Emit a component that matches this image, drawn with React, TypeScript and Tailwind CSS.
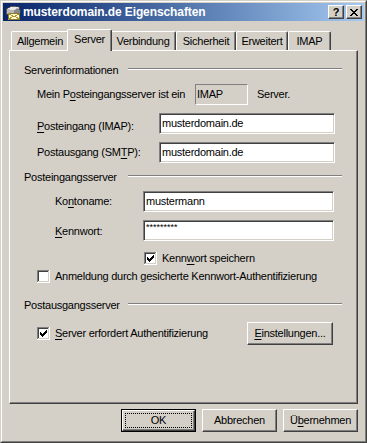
import React from "react";

const U = ({ c }: { c: string }) => (
  <span className="underline decoration-1 underline-offset-[2px]">{c}</span>
);

const sunken =
  "border border-t-[#808080] border-l-[#808080] border-r-white border-b-white shadow-[inset_1px_1px_0_#404040,inset_-1px_-1px_0_#d4d0c8]";
const raised =
  "border border-t-white border-l-white border-r-[#404040] border-b-[#404040] shadow-[inset_-1px_-1px_0_#808080]";

function Check({ checked }: { checked: boolean }) {
  return (
    <svg width="13" height="13" viewBox="0 0 13 13" shapeRendering="crispEdges" className="block shrink-0">
      <rect x="0" y="0" width="13" height="13" fill="#fff" />
      <rect x="0" y="0" width="12" height="1" fill="#808080" />
      <rect x="0" y="0" width="1" height="12" fill="#808080" />
      <rect x="1" y="1" width="10" height="1" fill="#404040" />
      <rect x="1" y="1" width="1" height="10" fill="#404040" />
      <rect x="1" y="11" width="11" height="1" fill="#d4d0c8" />
      <rect x="11" y="1" width="1" height="11" fill="#d4d0c8" />
      {checked && (
        <g fill="#000">
          <rect x="9" y="3" width="1" height="1" />
          <rect x="8" y="4" width="2" height="1" />
          <rect x="3" y="5" width="1" height="1" />
          <rect x="7" y="5" width="3" height="1" />
          <rect x="3" y="6" width="2" height="1" />
          <rect x="6" y="6" width="3" height="1" />
          <rect x="3" y="7" width="5" height="1" />
          <rect x="4" y="8" width="3" height="1" />
          <rect x="5" y="9" width="1" height="1" />
        </g>
      )}
    </svg>
  );
}

function Heading({ text }: { text: string }) {
  return (
    <div className="flex h-[13px] items-start">
      <div className="w-[118px] pl-[14px] whitespace-nowrap">{text}</div>
      <div className="mt-[4px] h-[2px] w-[214px] border-t border-b border-t-[#808080] border-b-white" />
    </div>
  );
}

function Field({ value, w }: { value: string; w: string }) {
  return (
    <div className={`${sunken} ${w} flex h-[21px] items-center bg-white px-[2px] whitespace-nowrap`}>{value}</div>
  );
}

function TitleIcon() {
  return (
    <svg width="16" height="16" viewBox="0 0 16 16" className="block shrink-0" shapeRendering="crispEdges">
      <path d="M1 5 L7 2 L14 3 L15 6 L15 9 L9 12 L1 10 Z" fill="#b8b8b8" />
      <path d="M1 5 L7 2 L14 3 L9 6 Z" fill="#e8e8e8" />
      <path d="M9 6 L15 4 L15 9 L9 12 Z" fill="#888" />
      <path d="M1 5 L7 2 L14 3 L15 6 L15 9 L9 12 L1 10 Z" fill="none" stroke="#404040" strokeWidth="0.8" />
      <rect x="3.5" y="9.5" width="11" height="6" fill="#fffbd0" stroke="#8a7a30" />
      <path d="M3.5 9.5 L9 13 L14.5 9.5 M3.5 15.5 L7.5 12.5 M14.5 15.5 L10.5 12.5" fill="none" stroke="#b09a30" />
    </svg>
  );
}

const tabs: { label: string; w: string; sw: string }[] = [
  { label: "Allgemein", w: "w-[58px]", sw: "w-[62px]" },
  { label: "Server", w: "w-[41px]", sw: "w-[45px]" },
  { label: "Verbindung", w: "w-[66px]", sw: "w-[70px]" },
  { label: "Sicherheit", w: "w-[60px]", sw: "w-[64px]" },
  { label: "Erweitert", w: "w-[52px]", sw: "w-[56px]" },
  { label: "IMAP", w: "w-[43px]", sw: "w-[47px]" },
];

export default function App() {
  return (
    <div className="h-[443px] w-[367px] bg-[#d4d0c8] border border-t-[#d4d0c8] border-l-[#d4d0c8] border-r-[#404040] border-b-[#404040] font-['Liberation_Sans',Arial,sans-serif] text-[11px] leading-[13px] tracking-[-0.25px] text-black">
      <div className="flex h-full w-full flex-col border border-t-white border-l-white border-r-[#808080] border-b-[#808080] p-[1px]">
        {/* title bar */}
        <div className="flex h-[18px] shrink-0 items-center bg-gradient-to-r from-[#0a246a] to-[#a6caf0] pl-[2px] pr-[2px]">
          <TitleIcon />
          <div className="ml-[2px] whitespace-nowrap text-[12px] font-bold tracking-[-0.1px] text-white">
            musterdomain.de Eigenschaften
          </div>
          <div className="ml-auto flex gap-[2px]">
            <div className={`${raised} flex h-[14px] w-[16px] items-center justify-center bg-[#d4d0c8] text-[11px] font-bold leading-none`}>
              ?
            </div>
            <div className={`${raised} flex h-[14px] w-[16px] items-center justify-center bg-[#d4d0c8]`}>
              <svg width="8" height="7" viewBox="0 0 8 7" shapeRendering="crispEdges" className="block">
                <g fill="#000">
                  <rect x="0" y="0" width="2" height="1" />
                  <rect x="6" y="0" width="2" height="1" />
                  <rect x="1" y="1" width="2" height="1" />
                  <rect x="5" y="1" width="2" height="1" />
                  <rect x="2" y="2" width="4" height="1" />
                  <rect x="3" y="3" width="2" height="1" />
                  <rect x="2" y="4" width="4" height="1" />
                  <rect x="1" y="5" width="2" height="1" />
                  <rect x="5" y="5" width="2" height="1" />
                  <rect x="0" y="6" width="2" height="1" />
                  <rect x="6" y="6" width="2" height="1" />
                </g>
              </svg>
            </div>
          </div>
        </div>

        <div className="flex flex-col px-[6px] pt-[8px]">
          {/* tabs */}
          <div className="flex h-[21px] items-end pl-[2px]">
            {tabs.map((t) =>
              t.label === "Server" ? (
                <div
                  key={t.label}
                  className={`${t.sw} relative z-10 -mx-[2px] mb-[-1px] flex h-[22px] justify-center rounded-t-[2px] border-t border-l border-r border-t-white border-l-white border-r-[#404040] bg-[#d4d0c8] pt-[3px] shadow-[inset_-1px_0_0_#808080]`}
                >
                  {t.label}
                </div>
              ) : (
                <div
                  key={t.label}
                  className={`${t.w} flex h-[19px] items-center justify-center rounded-t-[2px] border-t border-l border-r border-t-white border-l-white border-r-[#404040] shadow-[inset_-1px_0_0_#808080]`}
                >
                  {t.label}
                </div>
              )
            )}
          </div>

          {/* panel */}
          <div className={`h-[354px] w-[349px] ${raised} flex flex-col`}>
            <div className="mt-[13px]">
              <Heading text="Serverinformationen" />
            </div>

            <div className="mt-[7px] flex h-[21px] items-center">
              <div className="w-[185px] pl-[27px] whitespace-nowrap">
                Mein P<U c="o" />steingangsserver ist ein
              </div>
              <div className="flex h-[21px] w-[53px] items-center border border-t-[#808080] border-l-[#808080] border-r-white border-b-white px-[1px]">
                IMAP
              </div>
              <div className="ml-[9px]">Server.</div>
            </div>

            <div className="mt-[8px] flex h-[21px] items-start">
              <div className="w-[149px] pl-[27px] pt-[7px] whitespace-nowrap">
                <U c="P" />osteingang (IMAP):
              </div>
              <Field value="musterdomain.de" w="w-[176px]" />
            </div>

            <div className="mt-[8px] flex h-[21px] items-center">
              <div className="w-[149px] pl-[27px] whitespace-nowrap">
                Postausgang (SM<U c="T" />P):
              </div>
              <Field value="musterdomain.de" w="w-[176px]" />
            </div>

            <div className="mt-[8px]">
              <Heading text="Posteingangsserver" />
            </div>

            <div className="mt-[7px] flex h-[21px] items-center">
              <div className="w-[133px] pl-[45px] whitespace-nowrap">
                Ko<U c="n" />toname:
              </div>
              <Field value="mustermann" w="w-[191px]" />
            </div>

            <div className="mt-[8px] flex h-[21px] items-start">
              <div className="w-[133px] pl-[45px] pt-[5px] whitespace-nowrap">
                <U c="K" />ennwort:
              </div>
              <div className={`${sunken} flex h-[21px] w-[191px] items-start bg-white px-[2px] pt-[1px] text-[9px] leading-[10px] tracking-[0px]`}>
                *********
              </div>
            </div>

            <div className="mt-[11px] flex h-[13px] items-center pl-[134px]">
              <Check checked />
              <div className="ml-[5px] whitespace-nowrap">
                Kenn<U c="w" />ort speichern
              </div>
            </div>

            <div className="mt-[5px] flex h-[13px] items-center pl-[27px]">
              <Check checked={false} />
              <div className="ml-[5px] whitespace-nowrap">
                Anmeldung durch gesicherte Kennwort-Authentifizierung
              </div>
            </div>

            <div className="mt-[16px]">
              <Heading text="Postausgangsserver" />
            </div>

            <div className="mt-[10px] flex h-[23px] items-center">
              <div className="flex w-[237px] items-center pl-[27px]">
                <Check checked />
                <div className="ml-[5px] whitespace-nowrap">
                  <U c="S" />erver erfordert Authentifizierung
                </div>
              </div>
              <div className={`${raised} flex h-[23px] w-[86px] items-center justify-center`}>
                <span>
                  <U c="E" />instellungen...
                </span>
              </div>
            </div>
          </div>

          {/* buttons */}
          <div className="mt-[5px] flex justify-end gap-[6px]">
            <div className="h-[23px] w-[75px] border border-black">
              <div className={`${raised} flex h-full w-full p-[2px]`}>
                <div className="flex flex-1 items-center justify-center border border-dotted border-black">OK</div>
              </div>
            </div>
            <div className={`${raised} flex h-[23px] w-[75px] items-center justify-center`}>Abbrechen</div>
            <div className={`${raised} flex h-[23px] w-[75px] items-center justify-center`}>
              <span>
                Ü<U c="b" />ernehmen
              </span>
            </div>
          </div>
        </div>
      </div>
    </div>
  );
}
